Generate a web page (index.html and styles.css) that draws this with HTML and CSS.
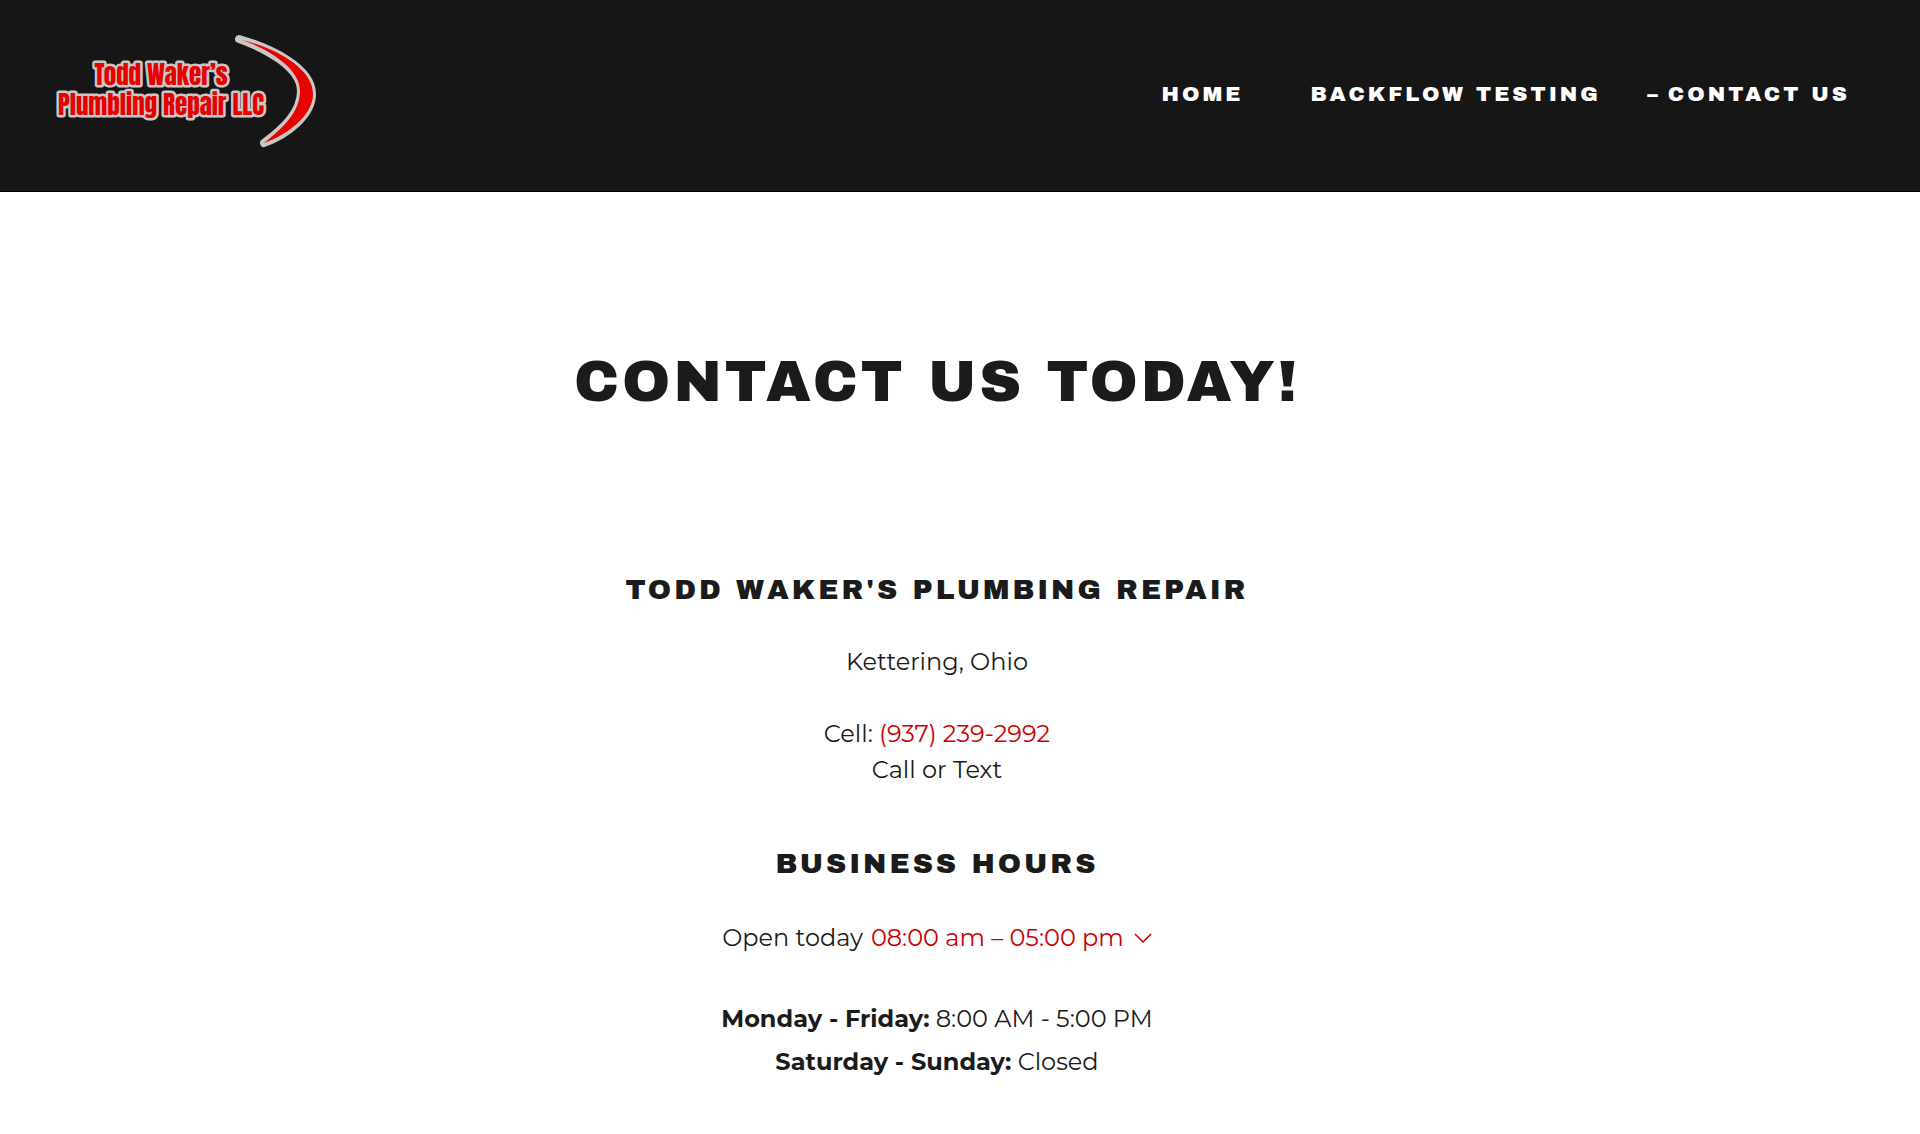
FILE: index.html
```html
<!DOCTYPE html>
<html lang="en">
<head>
  <meta charset="UTF-8">
  <meta name="viewport" content="width=device-width, initial-scale=1.0">
  <title>Contact Us</title>
  <link rel="stylesheet" href="styles.css">
</head>
<body>

  <header class="header">
    <a href="#" class="logo" aria-label="Home">
      <svg class="logo-art" viewBox="56 32 262 118">
        <path class="swoosh-outline" d="M239 39 C270 48 312 67 312 94 C312 115 288 134 264 143 C284 128 301 112 301 91 C301 68 267 49 239 39 Z"/>
        <path class="swoosh" d="M242 40 C272 47 313 67 313 94 C313 115 289 134 264 143 C283 128 300 112 300 91 C300 68 268 49 242 40 Z"/>
        <text class="logo-text" x="161" y="85">Todd Waker’s</text>
        <text class="logo-text" x="161" y="115">Plumbling Repair LLC</text>
      </svg>
    </a>
    <nav class="navbar">
      <a href="#">Home</a>
      <a href="#">Backflow Testing</a>
      <a href="#" class="active">Contact Us</a>
    </nav>
  </header>

  <main class="container">
    <h1>Contact us today!</h1>

    <h2>Todd Waker's Plumbing Repair</h2>
    <p class="address">Kettering, Ohio</p>
    <p>Cell: <a href="tel:9372392992">(937) 239-2992</a></p>
    <p>Call or Text</p>

    <h2 class="hours-title">Business Hours</h2>
    <div class="open-today">
      <span>Open today</span>
      <button type="button" class="hours-btn">
        08:00 am – 05:00 pm
        <svg class="chevron" viewBox="0 0 18 10"><path d="M1 1 L9 9 L17 1"/></svg>
      </button>
    </div>

    <div class="schedule">
      <p><strong>Monday - Friday:</strong> 8:00 AM - 5:00 PM</p>
      <p><strong>Saturday - Sunday:</strong> Closed</p>
    </div>
  </main>

</body>
</html>
```
FILE: styles.css
```css
* {
  box-sizing: border-box;
  margin: 0;
  padding: 0;
}

body {
  font-family: Montserrat, Inter, sans-serif;
  font-size: 24px;
  line-height: 36px;
  color: #1b1b1b;
  background-color: #fff;
}

a {
  color: #cc0000;
  text-decoration: none;
}

.header {
  display: flex;
  justify-content: space-between;
  align-items: flex-start;
  padding: 32px 70px 41px 56px;
  background-color: #161616;
  border-bottom: 1px solid #000;
}

.logo-art {
  display: block;
  width: 262px;
  height: 118px;
}

.logo-text {
  font-family: Anton, "Liberation Sans Narrow", "DejaVu Sans Condensed", sans-serif;
  font-size: 25px;
  font-weight: 400;
  text-anchor: middle;
  fill: #e60000;
  stroke: #cbc6c6;
  stroke-width: 5px;
  stroke-linejoin: round;
  paint-order: stroke;
}

.swoosh {
  fill: #e60000;
}

.swoosh-outline {
  fill: #cbc6c6;
  stroke: #cbc6c6;
  stroke-width: 8px;
  stroke-linejoin: round;
}

.navbar {
  display: flex;
  gap: 67px;
  padding-top: 44px;
}

.navbar a {
  position: relative;
  font-family: "Archivo Black", Inter, sans-serif;
  font-size: 21px;
  font-weight: 400;
  letter-spacing: 3px;
  text-transform: uppercase;
  color: #fff;
}

.navbar .active::before {
  content: "–";
  position: absolute;
  right: 100%;
  margin-right: 7px;
}

.container {
  padding: 155px 94px 54px 48px;
  text-align: center;
}

h1,
h2 {
  font-family: "Archivo Black", Inter, sans-serif;
  font-weight: 400;
  text-transform: uppercase;
}

h1 {
  font-size: 58px;
  line-height: 70px;
  letter-spacing: 3px;
  margin-bottom: 155px;
}

h2 {
  font-size: 28px;
  letter-spacing: 3px;
  margin-bottom: 36px;
}

.address {
  margin-bottom: 36px;
}

.hours-title {
  margin-top: 58px;
  margin-bottom: 38px;
}

.open-today {
  display: flex;
  justify-content: center;
  gap: 8px;
}

.hours-btn {
  display: flex;
  align-items: center;
  gap: 10px;
  font: inherit;
  color: #cc0000;
  background: none;
  border: none;
  cursor: pointer;
}

.chevron {
  width: 18px;
  height: 10px;
  fill: none;
  stroke: #cc0000;
  stroke-width: 1.5;
}

.schedule {
  display: grid;
  gap: 7px;
  margin-top: 45px;
}
```
